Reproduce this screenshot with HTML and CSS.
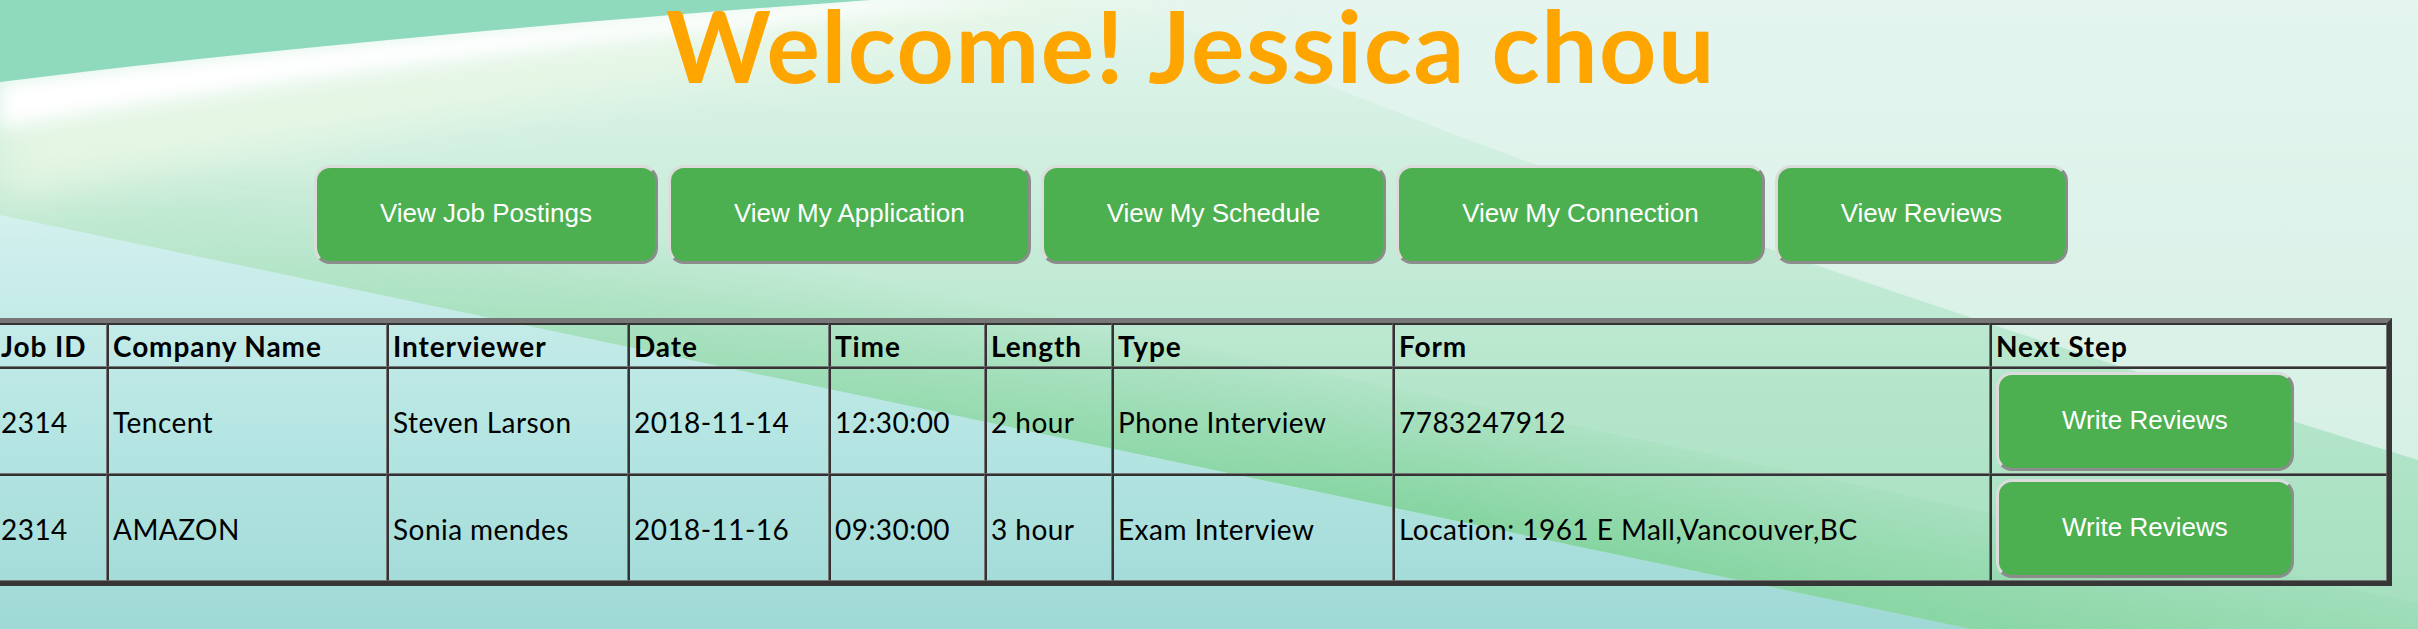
FILE: index.html
```html
<!DOCTYPE html>
<html lang="en">
<head>
<meta charset="utf-8">
<title>Welcome! Jessica chou</title>
<link rel="stylesheet" href="styles.css">
</head>
<body>
<svg class="bg" viewBox="0 0 2418 629" preserveAspectRatio="none" aria-hidden="true">
  <defs>
    <linearGradient id="gBase" x1="0" y1="0" x2="0" y2="629" gradientUnits="userSpaceOnUse">
      <stop offset="0" stop-color="#e4f5ef"/>
      <stop offset="1" stop-color="#d2efe2"/>
    </linearGradient>
    <linearGradient id="gGreen" x1="0" y1="0" x2="0" y2="629" gradientUnits="userSpaceOnUse">
      <stop offset="0" stop-color="#e2f5ed"/>
      <stop offset="0.3" stop-color="#cdeedd"/>
      <stop offset="0.6" stop-color="#b6e6cc"/>
      <stop offset="1" stop-color="#a4dfbe"/>
    </linearGradient>
    <linearGradient id="gStripe" x1="1200" y1="340" x2="1176" y2="467" gradientUnits="userSpaceOnUse">
      <stop offset="0" stop-color="#7fd29a" stop-opacity="0"/>
      <stop offset="1" stop-color="#7fd29a" stop-opacity="0.85"/>
    </linearGradient>
    <linearGradient id="gFadeX" x1="0" y1="0" x2="2418" y2="0" gradientUnits="userSpaceOnUse">
      <stop offset="0" stop-color="#fff" stop-opacity="0.15"/>
      <stop offset="0.6" stop-color="#fff" stop-opacity="1"/>
      <stop offset="1" stop-color="#fff" stop-opacity="0.6"/>
    </linearGradient>
    <mask id="mFade">
      <rect width="2418" height="629" fill="url(#gFadeX)"/>
    </mask>
    <linearGradient id="gCyan" x1="0" y1="215" x2="0" y2="629" gradientUnits="userSpaceOnUse">
      <stop offset="0" stop-color="#d2f0ee"/>
      <stop offset="0.55" stop-color="#b4e5e2"/>
      <stop offset="1" stop-color="#9fd9d6"/>
    </linearGradient>
    <filter id="fBlur" x="-10%" y="-50%" width="120%" height="200%">
      <feGaussianBlur stdDeviation="9"/>
    </filter>
    <filter id="fBlurWide" x="-10%" y="-50%" width="120%" height="200%">
      <feGaussianBlur stdDeviation="22"/>
    </filter>
  </defs>
  <rect width="2418" height="629" fill="url(#gBase)"/>
  <path d="M1117,0 C1350,95 1700,240 2418,460 L2418,629 L0,629 L0,0 Z" fill="url(#gGreen)"/>
  <path d="M0,95 L2418,603 L2418,723 L0,215 Z" fill="url(#gStripe)" mask="url(#mFade)"/>
  <path d="M0,215 L2418,723 L0,723 Z" fill="url(#gCyan)"/>
  <path d="M0,118 C340,70 700,30 1060,-10 L1280,-10 C880,45 400,120 0,200 Z" fill="#eef9e6" opacity="0.75" filter="url(#fBlurWide)"/>
  <path d="M0,82 C300,45 620,18 870,-2 L1040,-2 C720,26 340,70 0,128 Z" fill="#ffffff" filter="url(#fBlur)"/>
  <path d="M-10,-10 L890,-10 L870,0 C620,18 300,45 0,82 L-10,84 Z" fill="#8fdabd"/>
</svg>

<main class="page">
  <h1 class="title">Welcome! Jessica chou</h1>

  <nav class="menu">
    <button class="btn" type="button">View Job Postings</button>
    <button class="btn" type="button">View My Application</button>
    <button class="btn" type="button">View My Schedule</button>
    <button class="btn" type="button">View My Connection</button>
    <button class="btn" type="button">View Reviews</button>
  </nav>

  <table class="schedule">
    <thead>
      <tr>
        <th class="c-id">Job ID</th>
        <th class="c-company">Company Name</th>
        <th class="c-interviewer">Interviewer</th>
        <th class="c-date">Date</th>
        <th class="c-time">Time</th>
        <th class="c-length">Length</th>
        <th class="c-type">Type</th>
        <th class="c-form">Form</th>
        <th class="c-next">Next Step</th>
      </tr>
    </thead>
    <tbody>
      <tr>
        <td>2314</td>
        <td>Tencent</td>
        <td>Steven Larson</td>
        <td>2018-11-14</td>
        <td>12:30:00</td>
        <td>2 hour</td>
        <td>Phone Interview</td>
        <td>7783247912</td>
        <td><button class="btn" type="button">Write Reviews</button></td>
      </tr>
      <tr>
        <td>2314</td>
        <td>AMAZON</td>
        <td>Sonia mendes</td>
        <td>2018-11-16</td>
        <td>09:30:00</td>
        <td>3 hour</td>
        <td>Exam Interview</td>
        <td>Location: 1961 E Mall,Vancouver,BC</td>
        <td><button class="btn" type="button">Write Reviews</button></td>
      </tr>
    </tbody>
  </table>
</main>
</body>
</html>
```

FILE: styles.css
```css
html, body {
  margin: 0;
  padding: 0;
  width: 2418px;
  height: 629px;
  overflow: hidden;
}

body {
  position: relative;
  background: #d8f1e7;
}

.bg {
  position: absolute;
  top: 0;
  left: 0;
  width: 2418px;
  height: 629px;
  z-index: 0;
}

.page {
  position: relative;
  z-index: 1;
  width: 2402px;
  margin-left: -10px;
}

.title {
  margin: 0;
  padding-top: 2px;
  text-align: center;
  font-family: "Lato", "Open Sans", sans-serif;
  font-weight: 700;
  font-size: 100px;
  letter-spacing: 1.5px;
  line-height: 84px;
  color: #ffa500;
}

.menu {
  display: flex;
  justify-content: center;
  gap: 10px;
  margin-top: 79px;
}

.btn {
  display: inline-flex;
  align-items: center;
  justify-content: center;
  box-sizing: border-box;
  height: 99px;
  padding: 0 63px 2px;
  border: 3px solid;
  border-color: #dcdcdc #8c8c8c #8c8c8c #dcdcdc;
  border-radius: 16px;
  background: #4caf50;
  color: #ffffff;
  font-family: "Liberation Sans", Arial, sans-serif;
  font-size: 26px;
  white-space: nowrap;
  cursor: pointer;
}

.schedule {
  box-sizing: border-box;
  width: 2402px;
  margin-top: 54px;
  table-layout: fixed;
  border-collapse: separate;
  border-spacing: 0;
  border: 5px solid;
  border-color: #777777 #363636 #363636 #777777;
  font-family: "Lato", "Open Sans", sans-serif;
  font-size: 28px;
  color: #000000;
}

.schedule th,
.schedule td {
  box-sizing: border-box;
  border-style: solid;
  border-width: 2px 1px 1px 2px;
  border-color: #333333 #777777 #777777 #333333;
  text-align: left;
  vertical-align: middle;
  white-space: nowrap;
  overflow: hidden;
}

.schedule th {
  font-weight: 700;
  letter-spacing: 0.9px;
  padding: 4px 4px 3px;
}

.schedule td {
  letter-spacing: 0.45px;
  padding: 3px 4px 2px 4px;
}

.schedule td .btn {
  letter-spacing: 0;
}

.c-id { width: 112px; }
.c-company { width: 280px; }
.c-interviewer { width: 241px; }
.c-date { width: 201px; }
.c-time { width: 156px; }
.c-length { width: 127px; }
.c-type { width: 281px; }
.c-form { width: 597px; }
.c-next { width: 397px; }
```
